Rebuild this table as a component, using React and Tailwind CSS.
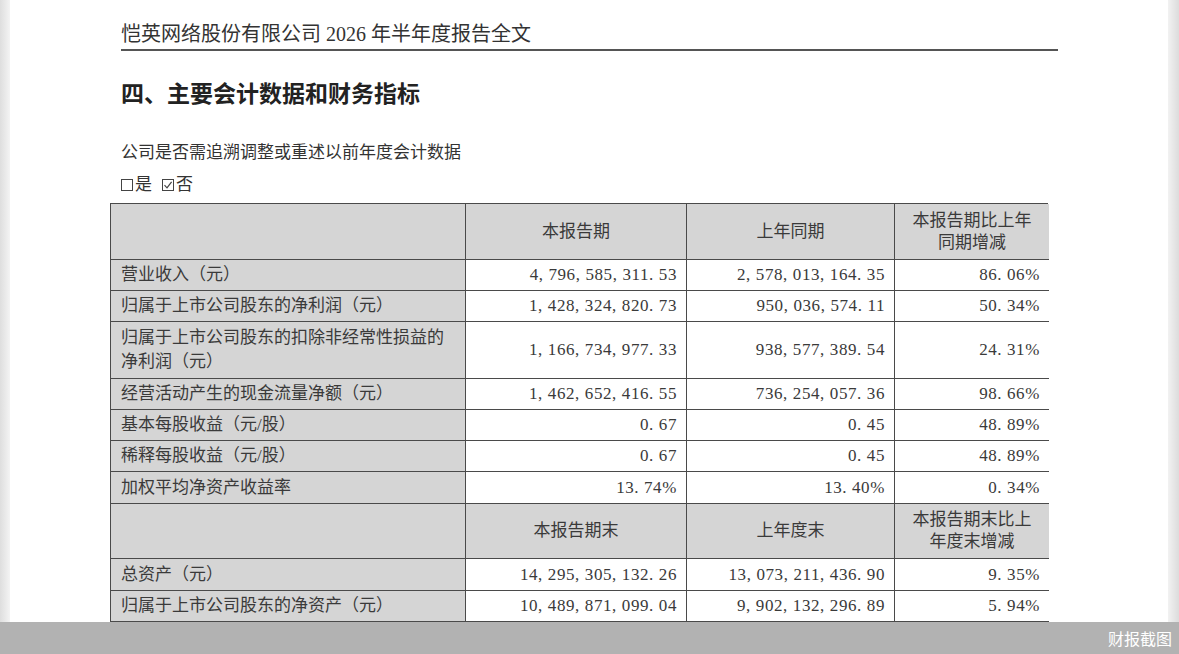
import React from "react";

const rows = [
  { label: ["营业收入（元）"], a: "4, 796, 585, 311. 53", b: "2, 578, 013, 164. 35", c: "86. 06%", h: "h-[31px]" },
  { label: ["归属于上市公司股东的净利润（元）"], a: "1, 428, 324, 820. 73", b: "950, 036, 574. 11", c: "50. 34%", h: "h-[31px]" },
  { label: ["归属于上市公司股东的扣除非经常性损益的", "净利润（元）"], a: "1, 166, 734, 977. 33", b: "938, 577, 389. 54", c: "24. 31%", h: "h-[57px]" },
  { label: ["经营活动产生的现金流量净额（元）"], a: "1, 462, 652, 416. 55", b: "736, 254, 057. 36", c: "98. 66%", h: "h-[31px]" },
  { label: ["基本每股收益（元/股）"], a: "0. 67", b: "0. 45", c: "48. 89%", h: "h-[31px]" },
  { label: ["稀释每股收益（元/股）"], a: "0. 67", b: "0. 45", c: "48. 89%", h: "h-[31px]" },
  { label: ["加权平均净资产收益率"], a: "13. 74%", b: "13. 40%", c: "0. 34%", h: "h-[32px]" },
];

const rows2 = [
  { label: ["总资产（元）"], a: "14, 295, 305, 132. 26", b: "13, 073, 211, 436. 90", c: "9. 35%", h: "h-[32px]" },
  { label: ["归属于上市公司股东的净资产（元）"], a: "10, 489, 871, 099. 04", b: "9, 902, 132, 296. 89", c: "5. 94%", h: "h-[31px]" },
];

// --- table header row (gray band) ---
const HeadRow = ({ cols, last, h }) => (
  <>
    <div className={`${h} bg-[#d5d5d5] border-r border-b border-[#4a4a4a]`} />
    {cols.map((c, i) => (
      <div
        key={i}
        className={`${h} bg-[#d5d5d5] border-r border-b border-[#4a4a4a] flex items-center justify-center text-center leading-[22px]`}
      >
        {c}
      </div>
    ))}
    <div className={`${h} bg-[#d5d5d5] border-b border-[#4a4a4a] flex flex-col items-center justify-center leading-[22px]`}>
      {last.map((l) => (
        <span key={l}>{l}</span>
      ))}
    </div>
  </>
);

const DataRow = ({ row }) => (
  <>
    <div className={`${row.h} bg-[#d5d5d5] border-r border-b border-[#4a4a4a] pl-[10px] flex flex-col justify-center leading-[24px]`}>
      {row.label.map((l) => (
        <span key={l}>{l}</span>
      ))}
    </div>
    <div className={`${row.h} bg-white border-r border-b border-[#4a4a4a] flex items-center justify-end pr-[9px] tracking-[0.6px]`}>
      {row.a}
    </div>
    <div className={`${row.h} bg-white border-r border-b border-[#4a4a4a] flex items-center justify-end pr-[9px] tracking-[0.6px]`}>
      {row.b}
    </div>
    <div className={`${row.h} bg-white border-b border-[#4a4a4a] flex items-center justify-end pr-[9px] tracking-[0.6px]`}>
      {row.c}
    </div>
  </>
);

// small checkbox glyph like in the PDF
const Box = ({ checked }) => (
  <span className="inline-flex items-center justify-center w-[12px] h-[12px] border border-[#444] mr-[2px]">
    {checked && (
      <svg width="10" height="10" viewBox="0 0 10 10" fill="none">
        <path d="M1.5 5.2 L4 7.8 L8.6 1.8" stroke="#444" strokeWidth="1.2" />
      </svg>
    )}
  </span>
);

export default function App() {
  return (
    <div className="w-full h-[654px] flex flex-col overflow-hidden bg-white text-[#333] font-['Liberation_Serif','Noto_Sans_CJK_SC',serif]">
      <div className="flex-1 flex min-h-0">
        {/* left shadow strip */}
        <div className="w-[10px] bg-gradient-to-r from-[#dedede] to-[#f4f4f4]" />

        {/* page */}
        <div className="flex-1 bg-white pl-[111px] pt-[21px]">
          <div className="w-[937px] border-b-2 border-[#555] text-[20px] leading-[27px] pb-[1px]">
            恺英网络股份有限公司 2026 年半年度报告全文
          </div>

          <h1 className="mt-[25px] text-[23px] leading-[32px] font-bold font-['Noto_Sans_CJK_SC',sans-serif] text-[#222]">
            四、主要会计数据和财务指标
          </h1>

          <p className="mt-[33px] text-[17px] leading-[24px]">公司是否需追溯调整或重述以前年度会计数据</p>

          <p className="mt-[8px] text-[17px] leading-[24px] flex items-center">
            <Box />
            <span>是</span>
            <span className="ml-[10px] flex items-center">
              <Box checked />
            </span>
            <span>否</span>
          </p>

          {/* --- main data table --- */}
          <div className="mt-[6px] -ml-[11px] w-[938px] grid grid-cols-[355px_221px_208px_154px] border-t border-l border-r border-[#4a4a4a] text-[17px] text-[#3a3a3a]">
            <HeadRow h="h-[56px]" cols={["本报告期", "上年同期"]} last={["本报告期比上年", "同期增减"]} />
            {rows.map((r) => (
              <DataRow key={r.label[0]} row={r} />
            ))}
            <HeadRow h="h-[55px]" cols={["本报告期末", "上年度末"]} last={["本报告期末比上", "年度末增减"]} />
            {rows2.map((r) => (
              <DataRow key={r.label[0]} row={r} />
            ))}
          </div>
        </div>

        {/* right shadow strip */}
        <div className="w-[11px] bg-gradient-to-r from-[#f2f2f2] to-[#dcdcdc]" />
      </div>

      {/* bottom watermark bar */}
      <div className="h-[32px] shrink-0 bg-[#b2b2b2] flex items-center justify-end pr-[7px]">
        <span className="text-white text-[16px] font-['Noto_Sans_CJK_SC',sans-serif]">财报截图</span>
      </div>
    </div>
  );
}
